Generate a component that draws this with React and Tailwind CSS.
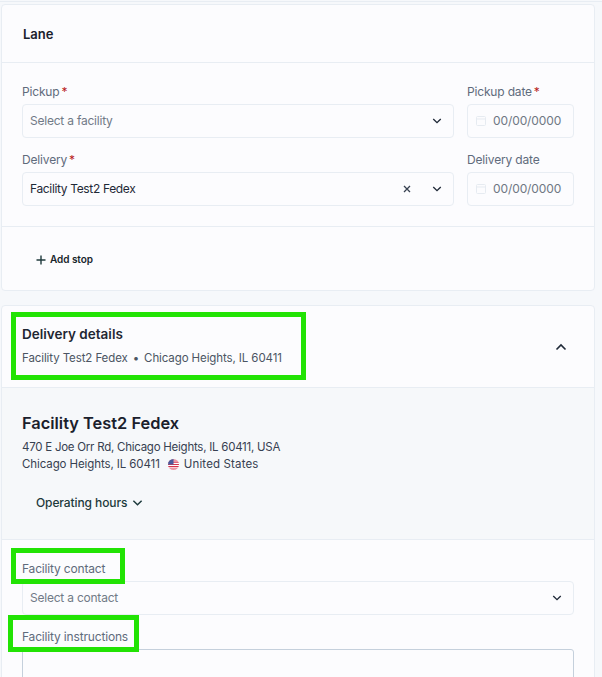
import React from "react";

const font = { fontFamily: '"Inter", "Noto Sans", sans-serif' };

function Chevron({ up = false, className = "" }) {
  return (
    <svg width="12" height="8" viewBox="0 0 12 8" fill="none" className={className}>
      <path d={up ? "M1.5 6.5 6 2l4.5 4.5" : "M1.5 1.5 6 6l4.5-4.5"} stroke="currentColor" strokeWidth="1.6" />
    </svg>
  );
}

function Req() {
  return <span className="text-[#b91c1c] ml-[2px]">*</span>;
}

function Label({ children, req }) {
  return (
    <div className="h-[16px] flex items-center text-[12px] tracking-[-0.17px] text-[#5f6b7c] mb-[4px]">
      {children}
      {req && <Req />}
    </div>
  );
}

function Select({ value, placeholder, clear }) {
  return (
    <div className="h-[34px] flex items-center border border-[#e8edf3] rounded-[4px] pl-[7px] pr-[11px] text-[12px] tracking-[-0.22px]">
      <span className={`flex-1 ${value ? "text-[#1f2937] tracking-[-0.35px]" : "text-[#717a87]"}`}>{value || placeholder}</span>
      {clear && (
        <svg width="8" height="8" viewBox="0 0 8 8" className="mr-[21px] text-[#374151]" fill="none">
          <path d="M1 1l6 6M7 1 1 7" stroke="currentColor" strokeWidth="1.3" />
        </svg>
      )}
      <Chevron className="text-[#1f2937] w-[10px]" />
    </div>
  );
}

function DateInput() {
  return (
    <div className="h-[34px] flex items-center border border-[#e8edf3] rounded-[4px] pl-[8px] text-[12px] tracking-[-0.1px] text-[#6f7783]">
      <svg width="10" height="10" viewBox="0 0 10 10" fill="none" className="mr-[7px] text-[#e6ebf1]">
        <rect x="0.5" y="0.5" width="9" height="9" rx="1" stroke="currentColor" />
        <path d="M0.5 3h9" stroke="currentColor" />
      </svg>
      00/00/0000
    </div>
  );
}

function Flag() {
  return (
    <svg width="11" height="11" viewBox="0 0 11 11" className="mx-[5px]">
      <defs>
        <clipPath id="flag-circle">
          <circle cx="5.5" cy="5.5" r="5.5" />
        </clipPath>
      </defs>
      <g clipPath="url(#flag-circle)">
        <rect width="11" height="11" fill="#fff" />
        <path d="M0 1h11M0 3.2h11M0 5.5h11M0 7.7h11M0 10h11" stroke="#d6334c" strokeWidth="1.2" />
        <rect width="5.5" height="5.5" fill="#4a5a9c" />
      </g>
    </svg>
  );
}

function Highlight({ className }) {
  return <div className={`absolute border-[5px] border-[#22e304] ${className}`} />;
}

export default function App() {
  return (
    <div style={font} className="relative w-[602px] h-[677px] overflow-hidden bg-[#f6f8fb] pt-[4px] pl-[1px] pr-[7px]">
      <div className="absolute top-0 left-0 right-0 h-[2px] border-b border-[#e8edf3]" />
      <section className="h-[287px] bg-[#fcfcfe] border border-[#e8edf3] rounded-[4px] flex flex-col">
        <header className="h-[58px] shrink-0 flex items-center pl-[21px] pt-[2px] border-b border-[#e8edf3] text-[13px] font-semibold text-[#1a202c]">
          Lane
        </header>
        <div className="h-[164px] shrink-0 px-[20px] pt-[21px] border-b border-[#e8edf3] grid grid-cols-[432px_107px] gap-x-[13px] gap-y-[14px] content-start">
          <div>
            <Label req>Pickup</Label>
            <Select placeholder="Select a facility" />
          </div>
          <div>
            <Label req>Pickup date</Label>
            <DateInput />
          </div>
          <div>
            <Label>
              Delivery
              <Req />
            </Label>
            <Select value="Facility Test2 Fedex" clear />
          </div>
          <div>
            <Label>Delivery date</Label>
            <DateInput />
          </div>
        </div>
        <div className="flex-1 flex items-center pl-[34px] pt-[2px] text-[10px] tracking-[-0.05px] font-semibold text-[#17252b]">
          <svg width="10" height="10" viewBox="0 0 10 10" className="mr-[4px]" fill="none">
            <path d="M5 0.5v9M0.5 5h9" stroke="#1f3a3d" strokeWidth="1.4" />
          </svg>
          Add stop
        </div>
      </section>

      <section className="mt-[14px] h-[400px] bg-[#fcfcfe] border border-[#e8edf3] rounded-t-[4px]">
        <header className="h-[82px] flex items-center justify-between pl-[20px] pr-[27px] border-b border-[#e8edf3]">
          <div className="mb-[2px]">
            <div className="text-[13.5px] font-semibold text-[#1f2733] mb-[8px] leading-[16px]">Delivery details</div>
            <div className="flex items-center text-[11.5px] tracking-[-0.1px] text-[#4b5563] leading-[16px]">
              Facility Test2 Fedex
              <span className="mx-[5px]">•</span>
              Chicago Heights, IL 60411
            </div>
          </div>
          <Chevron up className="text-[#1f2937]" />
        </header>
        <div className="h-[152px] bg-[#f6f8fa] border-b border-[#e8edf3] pl-[20px] pt-[24px]">
          <div className="text-[16.4px] font-semibold leading-[22px] text-[#1a202c] mb-[5px]">Facility Test2 Fedex</div>
          <div className="text-[11.5px] tracking-[-0.25px] leading-[17px] text-[#374151]">470 E Joe Orr Rd, Chicago Heights, IL 60411, USA</div>
          <div className="flex items-center text-[11.5px] tracking-[-0.1px] leading-[17px] text-[#374151]">
            Chicago Heights, IL 60411
            <span className="w-[3px]" />
            <Flag />
            <span className="tracking-[0.15px]">United States</span>
          </div>
          <div className="mt-[21px] ml-[14px] flex items-center gap-[5px] text-[12px] tracking-[-0.1px] font-medium text-[#1d3a3c]">
            Operating hours
            <Chevron className="text-[#1d3a3c] w-[11px]" />
          </div>
        </div>
        <div className="pl-[20px] pr-[20px] pt-[21px]">
          <Label>Facility contact</Label>
          <Select placeholder="Select a contact" />
          <div className="mt-[14px]">
            <Label>Facility instructions</Label>
          </div>
          <div className="h-[60px] border border-[#c5d0dc] rounded-[3px]" />
        </div>
      </section>

      <Highlight className="left-[11px] top-[312px] w-[295px] h-[68px]" />
      <Highlight className="left-[11px] top-[548px] w-[114px] h-[36px]" />
      <Highlight className="left-[8px] top-[615px] w-[131px] h-[37px]" />
    </div>
  );
}
